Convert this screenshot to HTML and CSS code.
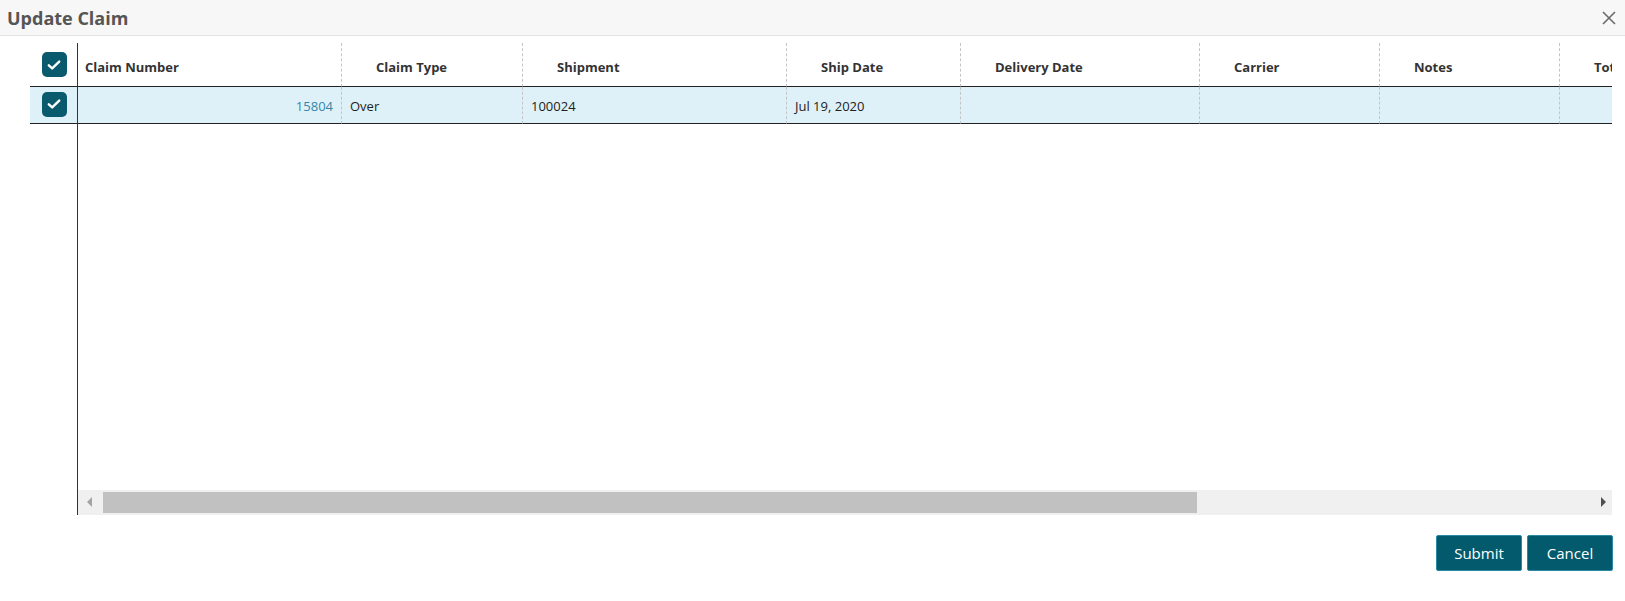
FILE: index.html
```html
<!DOCTYPE html>
<html>
<head>
<meta charset="utf-8">
<link rel="stylesheet" href="styles.css">
</head>
<body>
<div class="dialog">
  <div class="titlebar">
    <span class="title">Update Claim</span>
    <svg class="close" width="14" height="14" viewBox="0 0 14 14"><path d="M1 1 L13 13 M13 1 L1 13" stroke="#6a6a6a" stroke-width="1.6" fill="none"/></svg>
  </div>
  <div class="grid">
    <div class="frozen">
      <div class="hcell chk-cell"><span class="chk"><svg width="16" height="16" viewBox="0 0 16 16"><path d="M2.8 8.3 L6.2 11.4 L13.2 4.6" stroke="#fff" stroke-width="2.4" fill="none" stroke-linecap="round" stroke-linejoin="round"/></svg></span></div>
      <div class="dcell chk-cell sel"><span class="chk"><svg width="16" height="16" viewBox="0 0 16 16"><path d="M2.8 8.3 L6.2 11.4 L13.2 4.6" stroke="#fff" stroke-width="2.4" fill="none" stroke-linecap="round" stroke-linejoin="round"/></svg></span></div>
    </div>
    <div class="pane">
      <div class="viewport">
        <div class="hrow">
          <div class="hcell first c1">Claim Number</div>
          <div class="hcell c2">Claim Type</div>
          <div class="hcell c3">Shipment</div>
          <div class="hcell c4">Ship Date</div>
          <div class="hcell c5">Delivery Date</div>
          <div class="hcell c6">Carrier</div>
          <div class="hcell c7">Notes</div>
          <div class="hcell c8">Total</div>
        </div>
        <div class="drow sel">
          <div class="dcell c1 num link">15804</div>
          <div class="dcell c2">Over</div>
          <div class="dcell c3">100024</div>
          <div class="dcell c4">Jul 19, 2020</div>
          <div class="dcell c5"></div>
          <div class="dcell c6"></div>
          <div class="dcell c7"></div>
          <div class="dcell c8"></div>
        </div>
      </div>
      <div class="hscroll">
        <span class="arrow left"></span>
        <div class="track"><div class="thumb"></div></div>
        <span class="arrow right"></span>
      </div>
    </div>
  </div>
  <div class="actions">
    <button class="btn">Submit</button>
    <button class="btn">Cancel</button>
  </div>
</div>
</body>
</html>
```

FILE: styles.css
```css
* { box-sizing: border-box; }
html, body { margin: 0; padding: 0; background: #fff; }
body { font-family: "Open Sans", "Liberation Sans", sans-serif; color: #333; }

.titlebar {
  height: 36px;
  background: #f7f7f7;
  border-bottom: 1px solid #e2e2e2;
  display: flex;
  align-items: center;
  justify-content: space-between;
  padding: 0 9px 0 7px;
}
.title { font-size: 18px; font-weight: 700; color: #555; letter-spacing: 0; }
.close { display: block; margin-top: 1px; }

.grid {
  display: flex;
  margin: 7px 13px 0 30px;
  height: 472px;
}
.frozen { width: 47px; flex: none; }
.pane {
  flex: 1;
  border-left: 1px solid #333;
  display: flex;
  flex-direction: column;
  min-width: 0;
}
.viewport { flex: 1; overflow: hidden; }

.hrow, .drow { display: flex; width: max-content; }
.hcell {
  height: 44px;
  border-bottom: 1px solid #222;
  font-size: 13px;
  font-weight: 700;
  color: #333;
  display: flex;
  align-items: center;
  padding: 4px 0 0 34px;
  border-right: 1px dashed #c4c4c4;
  white-space: nowrap;
}
.hcell.first { padding-left: 7px; }
.dcell {
  height: 37px;
  border-bottom: 1px solid #222;
  font-size: 13px;
  color: #222;
  display: flex;
  align-items: center;
  padding: 2px 8px 0 8px;
  border-right: 1px dashed #c4c4c4;
  white-space: nowrap;
}
.sel, .drow.sel .dcell { background: #dff1f8; }
.dcell.num { justify-content: flex-end; }
.link { color: #3587a8; }

.chk-cell { justify-content: center; padding: 0; border-right: none; }
.frozen .hcell { padding: 0 0 0 1px; }
.frozen .dcell { padding: 0 0 2px 1px; }
.chk {
  width: 25px; height: 25px;
  border-radius: 5px;
  background: #0a5a6e;
  display: flex;
  align-items: center;
  justify-content: center;
}

.c1 { width: 264px; }
.c2 { width: 181px; }
.c3 { width: 264px; }
.c4 { width: 174px; }
.c5 { width: 239px; }
.c6 { width: 180px; }
.c7 { width: 180px; }
.c8 { width: 180px; }

.hscroll {
  height: 25px;
  background: #f0f0f0;
  display: flex;
  align-items: center;
}
.track { flex: 1; height: 21px; display: flex; }
.thumb { width: 1094px; height: 21px; background: #c1c1c1; }
.arrow { width: 25px; height: 25px; flex: none; position: relative; }
.arrow.left::after {
  content: ""; position: absolute; left: 9px; top: 7px;
  border-top: 5px solid transparent; border-bottom: 5px solid transparent;
  border-right: 5px solid #a3a3a3;
}
.arrow.right { width: 16px; }
.arrow.right::after {
  content: ""; position: absolute; left: 5px; top: 7px;
  border-top: 5px solid transparent; border-bottom: 5px solid transparent;
  border-left: 5px solid #505050;
}

.actions {
  display: flex;
  justify-content: flex-end;
  gap: 5px;
  margin: 20px 12px 0 0;
}
.btn {
  width: 86px; height: 36px;
  background: #035a6d;
  border: 1px solid #2a8aa2;
  border-radius: 2px;
  color: #fff;
  font-family: "Open Sans", "Liberation Sans", sans-serif;
  font-size: 15px;
  font-weight: 400;
  padding: 0;
}
```
